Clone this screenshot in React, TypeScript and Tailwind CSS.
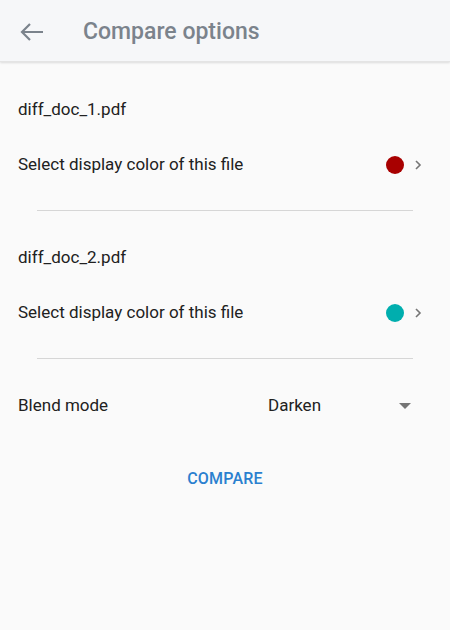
import React from 'react';

interface FileRow {
  name: string;
  color: string;
}

const files: FileRow[] = [
  { name: 'diff_doc_1.pdf', color: '#a80000' },
  { name: 'diff_doc_2.pdf', color: '#00aeae' },
];

function ColorRow({ color }: { color: string }) {
  return (
    <div className="flex items-center h-[60px] pl-[18px] pr-[28px]">
      <span className="flex-1 text-[17px] text-[#212121]">Select display color of this file</span>
      <span className="w-[18px] h-[18px] rounded-full" style={{ backgroundColor: color }} />
      <svg width="8" height="12" viewBox="0 0 8 12" className="ml-[10px]">
        <path d="M2 2l4 4-4 4" fill="none" stroke="#757575" strokeWidth="1.6" />
      </svg>
    </div>
  );
}

export default function App() {
  return (
    <div className="w-[450px] h-[630px] bg-[#fafafa] font-['Roboto',sans-serif] overflow-hidden">
      <header className="h-[62px] pt-[3px] bg-[#f6f7f9] flex items-center shadow-[0_1px_2px_rgba(0,0,0,0.12)] border-b border-[#e4e4e4]">
        <svg width="26" height="20" viewBox="0 0 26 20" className="ml-[19px]">
          <path d="M24 10H3M11 2L3 10l8 8" fill="none" stroke="#7b838c" strokeWidth="2.2" />
        </svg>
        <h1 className="ml-[38px] text-[23px] font-medium text-[#7b838c]">Compare options</h1>
      </header>

      <div className="pt-[23px]">
        {files.map((f) => (
          <div key={f.name}>
            <div className="h-[50px] flex items-center pl-[18px] text-[17px] text-[#212121]">{f.name}</div>
            <ColorRow color={f.color} />
            <div className="mx-[37px] mt-[15px] mb-[22px] h-px bg-[#d6d6d6]" />
          </div>
        ))}

        <div className="flex items-center h-[50px] pl-[18px] mt-[2px]">
          <span className="w-[250px] text-[17px] text-[#212121]">Blend mode</span>
          <span className="flex-1 text-[17px] text-[#212121]">Darken</span>
          <svg width="12" height="6" viewBox="0 0 12 6" className="mr-[39px]">
            <path d="M0 0h12L6 6z" fill="#757575" />
          </svg>
        </div>

        <div className="flex justify-center mt-[36px]">
          <button className="text-[16px] font-medium text-[#2a80cf] tracking-[0.2px]">COMPARE</button>
        </div>
      </div>
    </div>
  );
}
